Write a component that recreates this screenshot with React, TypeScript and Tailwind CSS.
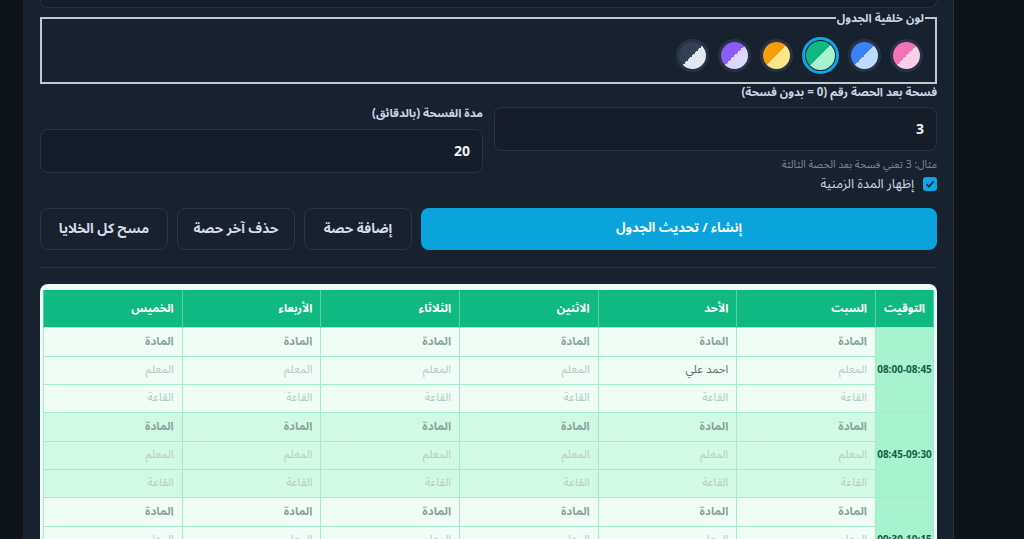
import React from "react";

const FONT = { fontFamily: "'Noto Sans Arabic', 'Noto Sans', 'DejaVu Sans', sans-serif" };

const swatches = [
  { a: "#f472b6", b: "#fbcfe8" },
  { a: "#3b82f6", b: "#bfdbfe" },
  { a: "#10b981", b: "#a7f3d0", active: true },
  { a: "#f59e0b", b: "#fde68a" },
  { a: "#8b5cf6", b: "#ddd6fe" },
  { a: "#334155", b: "#e2e8f0" },
];

const days = ["السبت", "الأحد", "الاثنين", "الثلاثاء", "الأربعاء", "الخميس"];

const slots = [
  { time: "08:00-08:45", bg: "bg-[#f0fdf7]" },
  { time: "08:45-09:30", bg: "bg-[#d1fae5]" },
  { time: "09:30-10:15", bg: "bg-[#f0fdf7]" },
];

function Swatch({ a, b, active }: { a: string; b: string; active?: boolean }) {
  return (
    <div
      className={
        active
          ? "w-[37px] h-[37px] rounded-full border-[3px] border-[#0ea5e9] p-[1px]"
          : "w-[33px] h-[33px] rounded-full border-[3px] border-[#273345]"
      }
    >
      <div
        className="w-full h-full rounded-full"
        style={{ background: `linear-gradient(135deg, ${a} 50%, ${b} 50%)` }}
      />
    </div>
  );
}

function Cell({ text, kind }: { text: string; kind: "subject" | "teacher" | "room" }) {
  const cls =
    kind === "subject"
      ? "font-bold text-[#8aa69c]"
      : text === "المعلم" || text === "القاعة"
      ? "text-[#b8cbc4]"
      : "text-[#5a6b66]";
  return (
    <td className="border border-[#a3ebcb] px-2 text-right text-[11.5px]">
      <span className={cls}>{text}</span>
    </td>
  );
}

export default function App() {
  return (
    <div className="min-h-screen w-full bg-[#0f141b] flex overflow-hidden" style={FONT}>
      <div dir="rtl" className="ml-[23px] w-[931px] bg-[#18212e] border-r border-[#263142] pl-[17px] pr-[16px] h-[539px] overflow-hidden">
        {/* input cut off at the top */}
        <div className="-mt-[36px] h-[44px] rounded-lg border border-[#263244] bg-[#151d29]" />

        <fieldset className="mt-[2px] border-2 border-[#c3c7cc] px-[10px] pb-[8px] pt-[11px]">
          <legend className="px-[1px] text-[11.5px] font-bold text-[#cbd5e1] leading-[16px]">
            لون خلفية الجدول
          </legend>
          <div className="flex items-center gap-[9px] pr-[2px]">
            {swatches.map((s, i) => (
              <Swatch key={i} {...s} />
            ))}
          </div>
        </fieldset>

        <div className="mt-[1px] text-[11.5px] font-bold text-[#cbd5e1] leading-[15px]">
          فسحة بعد الحصة رقم (0 = بدون فسحة)
        </div>

        <div className="grid grid-cols-2 gap-[11px]">
          <div>
            <div className="mt-[7px] h-[44px] rounded-lg border border-[#283445] bg-[#151d29] flex items-center pr-[12px] text-[14px] font-bold text-[#eef2f6]">
              3
            </div>
            <div className="mt-[6px] text-[10.5px] text-[#7d8998] leading-[16px]">
              مثال: 3 تعني فسحة بعد الحصة الثالثة
            </div>
            <div className="mt-[2px] flex items-center gap-[9px] h-[18px]">
              <div className="w-[14px] h-[14px] shrink-0 rounded-[3px] bg-[#0ea5e9] flex items-center justify-center">
                <svg width="10" height="10" viewBox="0 0 10 10">
                  <path d="M1.5 5.2 L4 7.6 L8.6 2.4" stroke="#1e293b" strokeWidth="1.8" fill="none" />
                </svg>
              </div>
              <span className="text-[13px] leading-[18px] text-[#cbd5e1]">إظهار المدة الزمنية</span>
            </div>
          </div>
          <div>
            <div className="mt-[5px] text-[11.5px] font-bold text-[#cbd5e1] leading-[16px]">
              مدة الفسحة (بالدقائق)
            </div>
            <div className="mt-[8px] h-[44px] rounded-lg border border-[#283445] bg-[#151d29] flex items-center pr-[12px] text-[14px] font-bold text-[#eef2f6]">
              20
            </div>
          </div>
        </div>

        <div className="mt-[15px] flex gap-[9px] h-[42px]">
          <button className="flex-1 rounded-lg bg-[#0aa3dc] text-white text-[13px] font-bold">
            إنشاء / تحديث الجدول
          </button>
          <button className="w-[108px] rounded-lg border border-[#2a3647] text-[#d5dce4] text-[13.5px] font-bold">
            إضافة حصة
          </button>
          <button className="w-[118px] rounded-lg border border-[#2a3647] text-[#d5dce4] text-[13.5px] font-bold">
            حذف آخر حصة
          </button>
          <button className="w-[128px] rounded-lg border border-[#2a3647] text-[#d5dce4] text-[13.5px] font-bold">
            مسح كل الخلايا
          </button>
        </div>

        <div className="mt-[17px] h-px bg-[#263142]" />

        <div className="mt-[16px] rounded-t-lg bg-[#ecfdf5] pt-[6px] px-[3px]">
          <table className="w-full table-fixed border-collapse">
            <colgroup>
              <col className="w-[58px]" />
              {days.map((d) => (
                <col key={d} />
              ))}
            </colgroup>
            <thead>
              <tr className="h-[37px] bg-[#10b981]">
                <th className="border-x border-[#4fd6a2] px-2 text-right text-[11.5px] font-bold text-white">التوقيت</th>
                {days.map((d) => (
                  <th key={d} className="border-x border-[#4fd6a2] px-2 text-right text-[11.5px] font-bold text-white">
                    {d}
                  </th>
                ))}
              </tr>
            </thead>
            <tbody>
              {slots.map((s, si) => (
                <React.Fragment key={s.time}>
                  <tr className={`h-[29px] ${s.bg}`}>
                    <td
                      rowSpan={3}
                      className="border border-[#a3ebcb] bg-[#a7f3d0] px-0 text-center text-[10px] font-bold text-[#175d48]"
                    >
                      {s.time}
                    </td>
                    {days.map((d) => (
                      <Cell key={d} text="المادة" kind="subject" />
                    ))}
                  </tr>
                  <tr className={`h-[28px] ${s.bg}`}>
                    {days.map((d, di) => (
                      <Cell key={d} text={si === 0 && di === 1 ? "احمد  علي" : "المعلم"} kind="teacher" />
                    ))}
                  </tr>
                  <tr className={`h-[28px] ${s.bg}`}>
                    {days.map((d) => (
                      <Cell key={d} text="القاعة" kind="room" />
                    ))}
                  </tr>
                </React.Fragment>
              ))}
            </tbody>
          </table>
        </div>
      </div>
    </div>
  );
}
